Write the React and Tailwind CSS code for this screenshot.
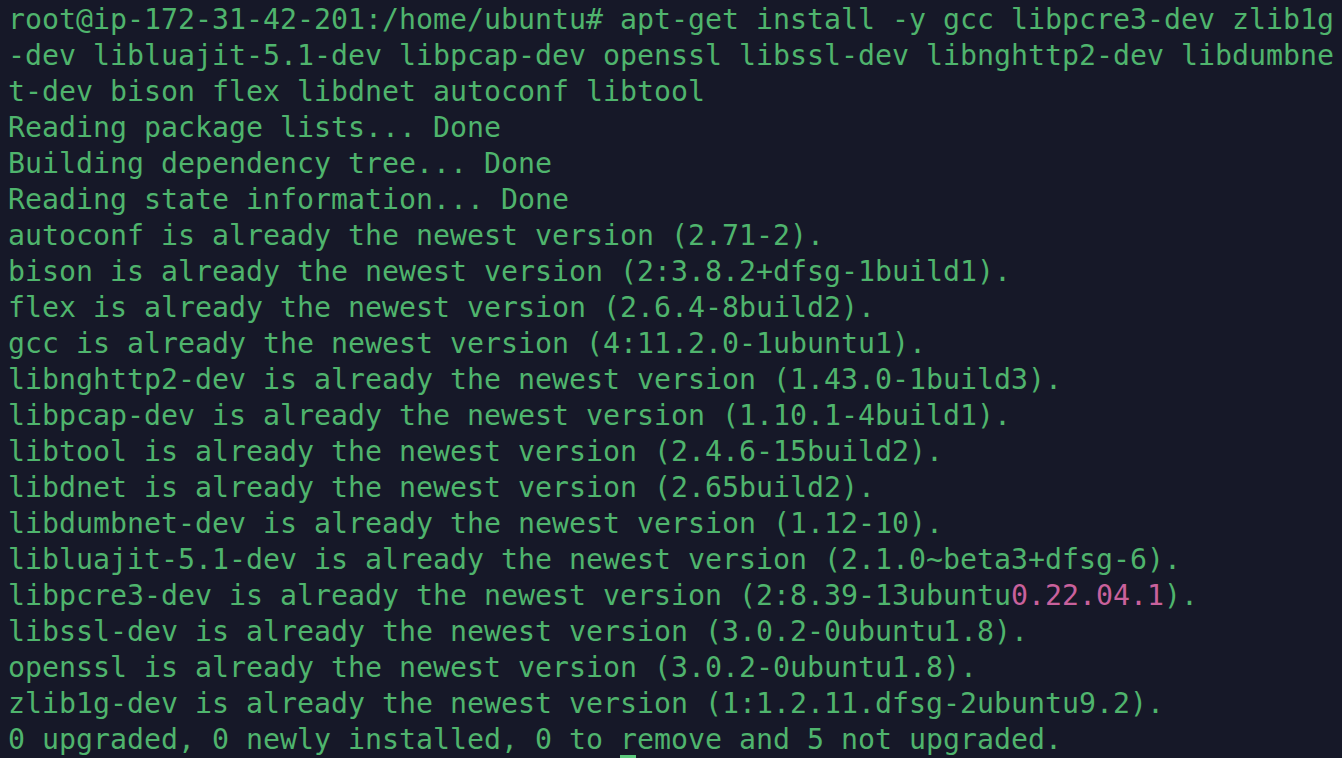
import React from 'react';

const lines = [
  'root@ip-172-31-42-201:/home/ubuntu# apt-get install -y gcc libpcre3-dev zlib1g',
  '-dev libluajit-5.1-dev libpcap-dev openssl libssl-dev libnghttp2-dev libdumbne',
  't-dev bison flex libdnet autoconf libtool',
  'Reading package lists... Done',
  'Building dependency tree... Done',
  'Reading state information... Done',
  'autoconf is already the newest version (2.71-2).',
  'bison is already the newest version (2:3.8.2+dfsg-1build1).',
  'flex is already the newest version (2.6.4-8build2).',
  'gcc is already the newest version (4:11.2.0-1ubuntu1).',
  'libnghttp2-dev is already the newest version (1.43.0-1build3).',
  'libpcap-dev is already the newest version (1.10.1-4build1).',
  'libtool is already the newest version (2.4.6-15build2).',
  'libdnet is already the newest version (2.65build2).',
  'libdumbnet-dev is already the newest version (1.12-10).',
  'libluajit-5.1-dev is already the newest version (2.1.0~beta3+dfsg-6).',
];

const after = [
  'libssl-dev is already the newest version (3.0.2-0ubuntu1.8).',
  'openssl is already the newest version (3.0.2-0ubuntu1.8).',
  'zlib1g-dev is already the newest version (1:1.2.11.dfsg-2ubuntu9.2).',
];

function Line({ children }) {
  return <div className="relative h-9 leading-9 whitespace-pre">{children}</div>;
}

export default function App() {
  return (
    <div
      className="w-[1342px] h-[758px] overflow-hidden bg-[#161828] text-[#4fb46d] text-[28.24px] pl-2 pt-[2px]"
      style={{ fontFamily: '"DejaVu Sans Mono", "Liberation Mono", monospace' }}
    >
      {lines.map((l, i) => (
        <Line key={i}>{l}</Line>
      ))}
      <Line>
        libpcre3-dev is already the newest version (2:8.39-13ubuntu
        <span className="text-[#c9619c]">0.22.04.1</span>).
      </Line>
      {after.map((l, i) => (
        <Line key={'a' + i}>{l}</Line>
      ))}
      <Line>
        0 upgraded, 0 newly installed, 0 to remove and 5 not upgraded.
        {/* cursor */}
        <span className="absolute left-[612px] bottom-0 w-[16px] h-[3px] bg-[#5cc97c]" />
      </Line>
    </div>
  );
}
